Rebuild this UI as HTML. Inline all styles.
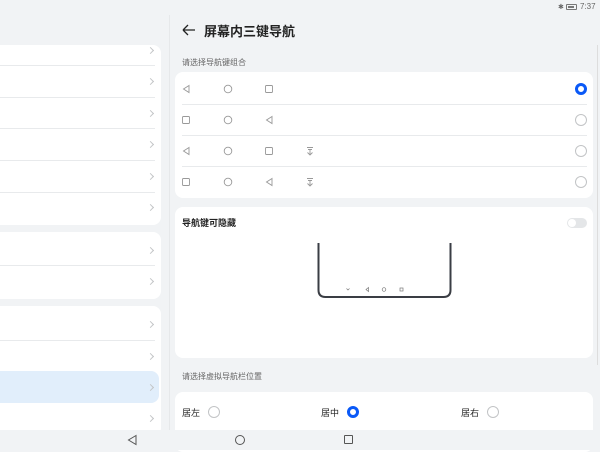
<!DOCTYPE html>
<html><head><meta charset="utf-8"><style>
*{margin:0;padding:0;box-sizing:border-box}
body{width:600px;height:450px;background:#f1f3f5;position:relative;overflow:hidden;font-family:"Liberation Sans","Noto Sans CJK SC",sans-serif;color:#222}
.a{position:absolute}
.card{position:absolute;background:#fff;border-radius:8px}
.sep{position:absolute;height:1px;background:#e8eaec}
.chev{position:absolute;width:5px;height:5px;border-top:1px solid #c4c6c8;border-right:1px solid #c4c6c8;transform:rotate(45deg)}
.rad{position:absolute;width:12px;height:12px;border:1px solid #c2c4c6;border-radius:50%}
.on{border:3px solid #0a59f7}
svg{position:absolute;overflow:visible}
</style></head><body>
<!-- left panel -->
<div class="card" style="left:-10px;top:45px;width:171px;height:180px"></div>
<div class="sep" style="left:0;top:65px;width:155px"></div>
<div class="sep" style="left:0;top:97px;width:155px"></div>
<div class="sep" style="left:0;top:128px;width:155px"></div>
<div class="sep" style="left:0;top:160px;width:155px"></div>
<div class="sep" style="left:0;top:192px;width:155px"></div>
<div class="card" style="left:-10px;top:232px;width:171px;height:67px"></div>
<div class="sep" style="left:0;top:265px;width:155px"></div>
<div class="card" style="left:-10px;top:306px;width:171px;height:130px"></div>
<div class="sep" style="left:0;top:340px;width:155px"></div>
<div class="a" style="left:0;top:371px;width:159px;height:32px;background:#e1eefb;border-radius:0 8px 8px 0"></div>
<div class="chev" style="left:148px;top:48px"></div>
<div class="chev" style="left:148px;top:79px"></div>
<div class="chev" style="left:148px;top:111px"></div>
<div class="chev" style="left:148px;top:142px"></div>
<div class="chev" style="left:148px;top:174px"></div>
<div class="chev" style="left:148px;top:205px"></div>
<div class="chev" style="left:148px;top:248px"></div>
<div class="chev" style="left:148px;top:279px"></div>
<div class="chev" style="left:148px;top:322px"></div>
<div class="chev" style="left:148px;top:354px"></div>
<div class="chev" style="left:148px;top:385px"></div>
<div class="chev" style="left:148px;top:416px"></div>
<div class="a" style="left:169px;top:15px;width:1px;height:415px;background:#e6e8ea"></div>
<!-- status -->
<div class="a" style="left:558px;top:3px;font-size:7px;color:#666">✱</div>
<div class="a" style="left:566px;top:4px;width:11px;height:6px;border:1px solid #777;border-radius:1px"><div style="margin:1px;width:6px;height:2px;background:#777"></div></div>
<div class="a" style="left:580px;top:2px;font-size:8px;color:#666">7:37</div>
<!-- title -->
<svg style="left:182px;top:24px" width="14" height="12"><path d="M1 6H13M1 6L6 1M1 6L6 11" stroke="#222" stroke-width="1.3" fill="none"/></svg>
<div class="a" style="left:204px;top:21px;font-size:13px;font-weight:bold;color:#222">屏幕内三键导航</div>
<div class="a" style="left:182px;top:57px;font-size:8px;color:#666">请选择导航键组合</div>
<div class="a" style="left:597px;top:45px;width:1px;height:320px;background:#ddd"></div>
<!-- card1 -->
<div class="card" style="left:175px;top:72px;width:418px;height:126px"></div>
<div class="sep" style="left:182px;top:104px;width:405px"></div>
<div class="sep" style="left:182px;top:135px;width:405px"></div>
<div class="sep" style="left:182px;top:166px;width:405px"></div>
<svg width="600" height="450" style="left:0;top:0" fill="none" stroke="#999" stroke-width="0.9">
<path d="M189 85.5L183.5 89L189 92.5Z"/><circle cx="228" cy="89" r="3.8"/><rect x="265.5" y="85.5" width="7" height="7" rx="1"/>
<rect x="182.5" y="116.5" width="7" height="7" rx="1"/><circle cx="228" cy="120" r="3.8"/><path d="M272 116.5L266.5 120L272 123.5Z"/>
<path d="M189 147.5L183.5 151L189 154.5Z"/><circle cx="228" cy="151" r="3.8"/><rect x="265.5" y="147.5" width="7" height="7" rx="1"/>
<path d="M307 147.5H313M308 149.5H312M310 150V155M307.5 152.5L310 155L312.5 152.5"/>
<rect x="182.5" y="178.5" width="7" height="7" rx="1"/><circle cx="228" cy="182" r="3.8"/><path d="M272 178.5L266.5 182L272 185.5Z"/>
<path d="M307 178.5H313M308 180.5H312M310 181V186M307.5 183.5L310 186L312.5 183.5"/>
</svg>
<div class="rad on" style="left:575px;top:83px"></div>
<div class="rad" style="left:575px;top:114px"></div>
<div class="rad" style="left:575px;top:145px"></div>
<div class="rad" style="left:575px;top:176px"></div>
<!-- card2 -->
<div class="card" style="left:175px;top:207px;width:418px;height:151px"></div>
<div class="a" style="left:182px;top:216px;font-size:9px;font-weight:bold;color:#222">导航键可隐藏</div>
<div class="a" style="left:567px;top:218px;width:20px;height:10px;border-radius:5px;background:#e4e6e8"><div style="margin:1px;width:8px;height:8px;border-radius:50%;background:#fff"></div></div>
<svg width="600" height="450" style="left:0;top:0" fill="none">
<path d="M318.5 243V290Q318.5 297 325.5 297H443.5Q450.5 297 450.5 290V243" stroke="#3a3d44" stroke-width="2"/>
<g stroke="#777" stroke-width="0.7"><path d="M346.5 288.5L348 290L349.5 288.5"/><path d="M368.5 287.5L366 289.5L368.5 291.5Z"/><circle cx="384" cy="289.5" r="1.8"/><rect x="400" y="288" width="3" height="3"/></g>
</svg>
<div class="a" style="left:182px;top:371px;font-size:8px;color:#666">请选择虚拟导航栏位置</div>
<!-- card3 -->
<div class="card" style="left:175px;top:392px;width:418px;height:60px"></div>
<div class="a" style="left:182px;top:406px;font-size:9px;color:#222">居左</div>
<div class="rad" style="left:208px;top:406px"></div>
<div class="a" style="left:321px;top:406px;font-size:9px;color:#222">居中</div>
<div class="rad on" style="left:347px;top:406px"></div>
<div class="a" style="left:461px;top:406px;font-size:9px;color:#222">居右</div>
<div class="rad" style="left:487px;top:406px"></div>
<!-- navbar -->
<div class="a" style="left:0;top:430px;width:600px;height:20px;background:#f1f3f5"></div>
<svg width="600" height="450" style="left:0;top:0" fill="none" stroke="#555" stroke-width="1">
<path d="M136 435.5L128.5 440L136 444.5Z"/><circle cx="240" cy="440" r="4.5"/><rect x="344.5" y="435.5" width="8" height="8" rx="0.5"/>
</svg>
</body></html>
